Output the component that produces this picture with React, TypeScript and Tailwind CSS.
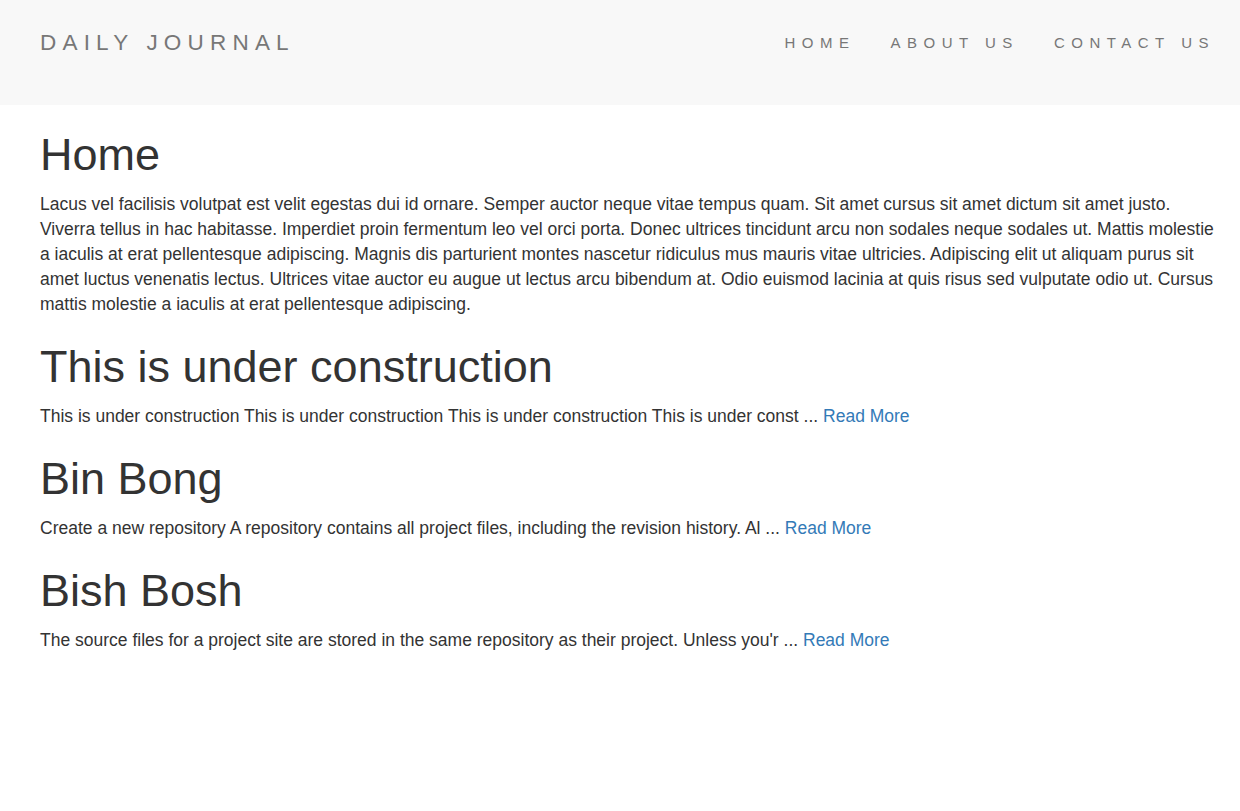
const posts = [
  {
    title: "This is under construction",
    excerpt:
      "This is under construction This is under construction This is under construction This is under const ...",
  },
  {
    title: "Bin Bong",
    excerpt:
      "Create a new repository A repository contains all project files, including the revision history. Al ...",
  },
  {
    title: "Bish Bosh",
    excerpt:
      "The source files for a project site are stored in the same repository as their project. Unless you'r ...",
  },
];

export default function App() {
  return (
    <div className="min-h-screen bg-white font-['Liberation_Sans',Arial,sans-serif] text-[#333]">
      <nav className="h-[105px] bg-[#f8f8f8] flex items-start justify-between pl-10 pr-[25px]">
        <a href="#" className="mt-[29px] text-[22.5px] leading-[28px] tracking-[6.2px] text-[#777] uppercase">
          Daily Journal
        </a>
        <ul className="flex gap-[35px] mt-[34px] text-[15px] leading-[18px] tracking-[6.5px] text-[#777]">
          <li><a href="#">HOME</a></li>
          <li><a href="#">ABOUT US</a></li>
          <li><a href="#">CONTACT US</a></li>
        </ul>
      </nav>

      <main className="pl-10 pr-[22px]">
        <h1 className="pt-[25px] text-[45px] leading-[49.5px] mb-[12.5px]">Home</h1>
        <p className="text-[17.5px] leading-[25px]">
          Lacus vel facilisis volutpat est velit egestas dui id ornare. Semper auctor neque vitae tempus quam. Sit amet
          cursus sit amet dictum sit amet justo. Viverra tellus in hac habitasse. Imperdiet proin fermentum leo vel orci
          porta. Donec ultrices tincidunt arcu non sodales neque sodales ut. Mattis molestie a iaculis at erat
          pellentesque adipiscing. Magnis dis parturient montes nascetur ridiculus mus mauris vitae ultricies. Adipiscing
          elit ut aliquam purus sit amet luctus venenatis lectus. Ultrices vitae auctor eu augue ut lectus arcu bibendum
          at. Odio euismod lacinia at quis risus sed vulputate odio ut. Cursus mattis molestie a iaculis at erat
          pellentesque adipiscing.
        </p>

        {posts.map((post) => (
          <div key={post.title}>
            <h1 className="mt-[25px] text-[45px] leading-[49.5px] mb-[12.5px]">{post.title}</h1>
            <p className="text-[17.5px] leading-[25px]">
              {post.excerpt}{" "}
              <a href="#" className="text-[#337ab7] hover:underline">
                Read More
              </a>
            </p>
          </div>
        ))}
      </main>
    </div>
  );
}
